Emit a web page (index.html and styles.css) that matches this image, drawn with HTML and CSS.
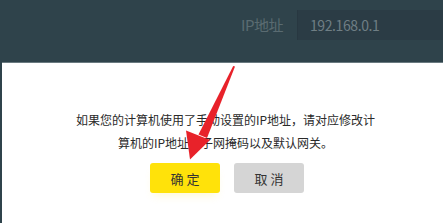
FILE: index.html
```html
<!DOCTYPE html>
<html lang="zh-CN">
<head>
<meta charset="utf-8">
<link rel="stylesheet" href="styles.css">
</head>
<body>
<div class="page">
  <header class="topbar">
    <span class="label">IP地址</span>
    <div class="input">192.168.0.1</div>
  </header>
  <section class="dialog">
    <p class="msg">如果您的计算机使用了手动设置的IP地址，请对应修改计<br>算机的IP地址、子网掩码以及默认网关。</p>
    <div class="actions">
      <button class="btn btn-ok">确 定</button>
      <button class="btn btn-cancel">取 消</button>
    </div>
  </section>
  <svg class="arrow" width="443" height="223" viewBox="0 0 443 223">
    <polygon fill="#e8222a" points="233.2,66 235,66.6 207,138 198.5,134.5"/>
    <polygon fill="#e8222a" points="186,130.5 210,140 190,159.5"/>
  </svg>
</div>
</body>
</html>
```
FILE: styles.css
```css
html, body {
  margin: 0;
  padding: 0;
}
body {
  width: 443px;
  height: 223px;
  overflow: hidden;
  background: #2f434b;
  font-family: "Noto Sans CJK SC", "Noto Sans", sans-serif;
}
.page {
  position: relative;
  width: 443px;
  height: 223px;
  display: flex;
  flex-direction: column;
}
.topbar {
  height: 62px;
  display: flex;
  align-items: flex-start;
  justify-content: flex-end;
  padding-top: 10px;
  box-sizing: border-box;
}
.label {
  font-size: 15px;
  line-height: 30px;
  color: #5a6b71;
  margin-right: 14px;
  letter-spacing: -0.5px;
}
.input {
  width: 146px;
  height: 30px;
  box-sizing: border-box;
  background: #2b3c45;
  border-left: 1px solid #283841;
  padding-left: 12px;
  font-size: 14px;
  line-height: 30px;
  color: #6f7e84;
  letter-spacing: -0.4px;
}
.dialog {
  flex: 1;
  margin-left: 2px;
  width: 447px;
  background: #ffffff;
  border-top: 1px solid #6a7a80;
  box-sizing: border-box;
  padding-top: 45px;
  text-align: center;
}
.msg {
  margin: 0;
  font-size: 12px;
  line-height: 23px;
  color: #2a2a2a;
}
.actions {
  margin-top: 9px;
  display: flex;
  justify-content: center;
  gap: 14px;
  padding-left: 3px;
}
.btn {
  width: 70px;
  height: 30px;
  border: none;
  border-radius: 3px;
  font-family: "Noto Sans CJK SC", "Noto Sans", sans-serif;
  font-size: 13px;
  color: #333;
  padding: 0;
}
.btn-ok {
  background: #ffe20a;
  box-shadow: 0 6px 8px -4px rgba(255, 230, 60, 0.25);
}
.btn-cancel {
  background: #d5d5d5;
}
.arrow {
  position: absolute;
  left: 0;
  top: 0;
  pointer-events: none;
}
```
